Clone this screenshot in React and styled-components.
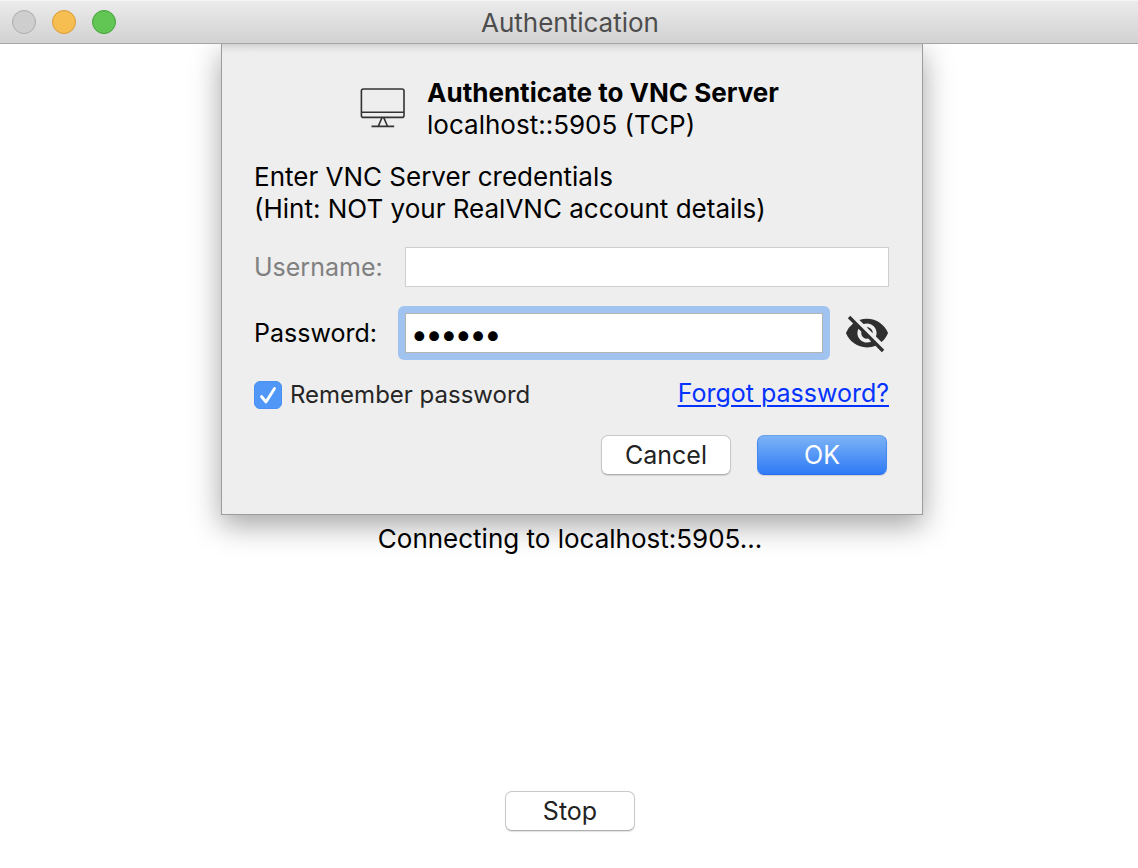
import React, { useState } from "react";
import styled, { createGlobalStyle, css } from "styled-components";
import { MdVisibilityOff } from "react-icons/md";

const GlobalStyle = createGlobalStyle`
  *, *::before, *::after { box-sizing: border-box; }
  body {
    margin: 0;
    background: #fff;
    color: #000;
    font: 400 25px/32px Inter, "Liberation Sans", sans-serif;
  }
  button, input { font: inherit; }
`;

const Window = styled.div`
  display: flex;
  flex-direction: column;
  min-height: 100vh;
`;

const TitleBar = styled.header`
  position: relative;
  display: flex;
  align-items: center;
  justify-content: center;
  height: 44px;
  padding: 2px 0 0 2px;
  background: linear-gradient(#ebebeb, #d2d2d2);
  border-top: 1px solid #f6f6f6;
  border-bottom: 1px solid #a6a6a6;
`;

const Title = styled.h1`
  margin: 0;
  font: inherit;
  font-size: 26px;
  color: #4d4d4d;
`;

const WindowControls = styled.div`
  position: absolute;
  top: 9px;
  left: 12px;
  display: flex;
  gap: 16px;
`;

const WindowControl = styled.button`
  width: 24px;
  height: 24px;
  padding: 0;
  border: 1px solid ${(p) => p.$edge};
  border-radius: 50%;
  background: ${(p) => p.$fill};
`;

const Content = styled.main`
  flex: 1;
  display: flex;
  flex-direction: column;
  align-items: center;
  padding: 0 0 37px 2px;
`;

const Sheet = styled.form`
  width: 100%;
  max-width: 702px;
  padding: 33px 33px 39px 32px;
  margin-left: 4px;
  background: linear-gradient(#d2d2d2, #e2e2e2 4px, #eeeeee 9px);
  border: 1px solid #9c9c9c;
  border-top: 0;
  box-shadow: 0 10px 28px rgba(0, 0, 0, 0.36);
`;

const ServerHeader = styled.div`
  display: flex;
  align-items: center;
  justify-content: center;
  gap: 21px;
  margin-bottom: 20px;
  padding-right: 4px;
`;

const ServerName = styled.h2`
  margin: 0;
  font: inherit;
  font-size: 26px;
  font-weight: 700;
`;

const Line = styled.p`
  margin: 0;
  font-size: 26px;
`;

const Fields = styled.div`
  display: grid;
  grid-template-columns: 151px minmax(0, 1fr);
  align-items: center;
  row-gap: 26px;
  margin: 22px 0 24px;
`;

const FieldLabel = styled.label`
  color: ${(p) => (p.$muted ? "#808080" : "#000")};
`;

const FieldRow = styled.div`
  display: flex;
  align-items: center;
  gap: 23px;
`;

const TextInput = styled.input`
  flex: 1;
  min-width: 0;
  height: 40px;
  padding: 0 8px;
  background: #fff;
  color: #000;
  border: 1px solid #cfcfcf;
  border-radius: 0;
  outline: none;
  ${(p) =>
    p.$active &&
    css`
      border-color: #b3b3b3;
      box-shadow: 0 0 0 7px #a1c3ef;
      clip-path: inset(-7px round 6px);
    `}

  &[type="password"] {
    padding: 0 6px;
    font-size: 31px;
    font-weight: 700;
  }
`;

const RevealButton = styled.button`
  display: flex;
  padding: 0;
  margin: -3px -1px -3px -2px;
  border: 0;
  background: none;
  color: #2f2f2f;
`;

const Options = styled.div`
  display: flex;
  align-items: center;
  justify-content: space-between;
`;

const CheckLabel = styled.label`
  display: flex;
  align-items: center;
  gap: 8px;
  font-size: 24px;
  color: #262626;
`;

const CheckMark = styled.span`
  position: relative;
  display: flex;
  width: 28px;
  height: 28px;

  svg {
    position: absolute;
    inset: 0;
    pointer-events: none;
  }
`;

const Checkbox = styled.input`
  appearance: none;
  width: 28px;
  height: 28px;
  margin: 0;
  border: 1px solid #bdbdbd;
  border-radius: 6px;
  background: #fff;

  &:checked {
    border-color: #4a8ff2;
    background: #5097f7;
  }
`;

const Link = styled.a`
  padding-bottom: 4px;
  color: #0433ff;
  text-decoration: underline;
  text-decoration-thickness: 2px;
  text-underline-offset: 3px;
`;

const Actions = styled.div`
  display: flex;
  justify-content: flex-end;
  gap: 26px;
  margin: 22px 2px 0 0;
`;

const Button = styled.button`
  width: 130px;
  height: 40px;
  padding: 0;
  border: 1px solid #c8c8c8;
  border-bottom-color: #b0b0b0;
  border-radius: 7px;
  background: #fff;
  color: #222;
  box-shadow: 0 1px 1px rgba(0, 0, 0, 0.12);
  ${(p) =>
    p.$primary &&
    css`
      border-color: #66a3f0 #4388f3 #2b6df0;
      background: linear-gradient(#7cb3f6, #2f7af6);
      color: #fff;
    `}
`;

const Status = styled.p`
  margin: 8px 0 auto;
  font-size: 26px;
`;

function MonitorIcon() {
  return (
    <svg width="46" height="42" viewBox="0 0 46 42" fill="none" stroke="#333" strokeWidth="1.6" aria-hidden="true">
      <rect x="1.4" y="1" width="42.6" height="28.4" rx="2" />
      <path d="M1.4 24.2H44M22 29.6 18.4 38M23.8 29.6 27.4 38M11.5 38.4H34.2" />
    </svg>
  );
}

export default function App() {
  const [username, setUsername] = useState("");
  const [password, setPassword] = useState("secret");
  const [remember, setRemember] = useState(true);
  const [revealed, setRevealed] = useState(false);

  return (
    <Window>
      <GlobalStyle />
      <TitleBar>
        <WindowControls>
          <WindowControl aria-label="Close" disabled $fill="#cecece" $edge="#adadad" />
          <WindowControl aria-label="Minimize" $fill="#f6be50" $edge="#d99b35" />
          <WindowControl aria-label="Zoom" $fill="#61c654" $edge="#46a13b" />
        </WindowControls>
        <Title>Authentication</Title>
      </TitleBar>
      <Content>
        <Sheet onSubmit={(e) => e.preventDefault()}>
          <ServerHeader>
            <MonitorIcon />
            <div>
              <ServerName>Authenticate to VNC Server</ServerName>
              <Line>localhost::5905 (TCP)</Line>
            </div>
          </ServerHeader>
          <Line>Enter VNC Server credentials</Line>
          <Line>(Hint: NOT your RealVNC account details)</Line>
          <Fields>
            <FieldLabel htmlFor="username" $muted>Username:</FieldLabel>
            <FieldRow>
              <TextInput id="username" disabled value={username} onChange={(e) => setUsername(e.target.value)} />
            </FieldRow>
            <FieldLabel htmlFor="password">Password:</FieldLabel>
            <FieldRow>
              <TextInput
                id="password"
                type={revealed ? "text" : "password"}
                $active
                value={password}
                onChange={(e) => setPassword(e.target.value)}
              />
              <RevealButton type="button" aria-label="Show password" onClick={() => setRevealed(!revealed)}>
                <MdVisibilityOff size={46} />
              </RevealButton>
            </FieldRow>
          </Fields>
          <Options>
            <CheckLabel>
              <CheckMark>
                <Checkbox type="checkbox" checked={remember} onChange={(e) => setRemember(e.target.checked)} />
                {remember && (
                  <svg width="28" height="28" viewBox="0 0 28 28" fill="none" stroke="#fff" strokeWidth="2.8" strokeLinecap="round" strokeLinejoin="round" aria-hidden="true">
                    <path d="M7.5 15.5 12 21 20.5 7.5" />
                  </svg>
                )}
              </CheckMark>
              Remember password
            </CheckLabel>
            <Link href="#forgot">Forgot password?</Link>
          </Options>
          <Actions>
            <Button type="button">Cancel</Button>
            <Button type="submit" $primary>OK</Button>
          </Actions>
        </Sheet>
        <Status>Connecting to localhost:5905...</Status>
        <Button type="button">Stop</Button>
      </Content>
    </Window>
  );
}
